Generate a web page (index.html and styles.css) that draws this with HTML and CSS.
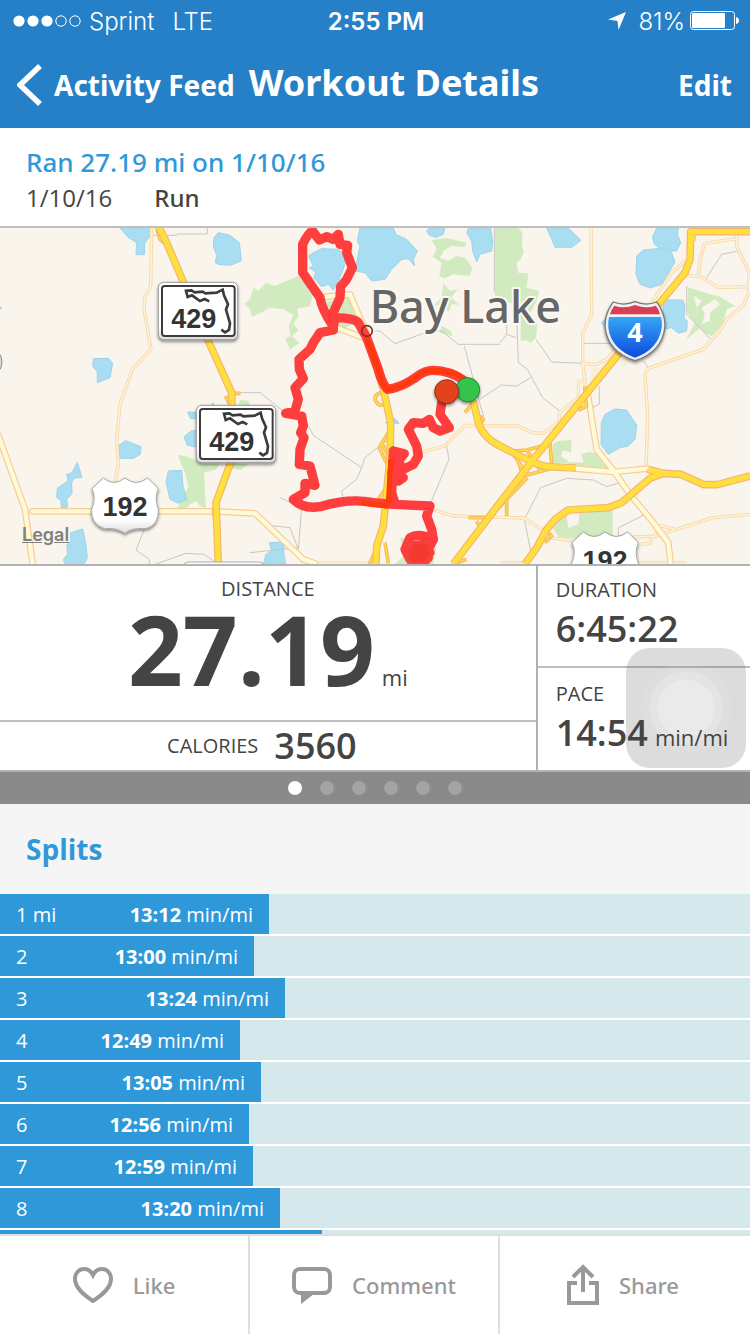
FILE: index.html
```html
<!DOCTYPE html>
<html lang="en">
<head>
<meta charset="utf-8">
<meta name="viewport" content="width=device-width, initial-scale=1">
<title>Workout Details</title>
<link rel="stylesheet" href="styles.css">
</head>
<body>
<div class="app">
  <header class="top">
    <div class="status">
      <div class="carrier">
        <svg class="signal" viewBox="0 0 68 12" aria-hidden="true">
          <g fill="#fff"><circle cx="6" cy="6" r="5.6"/><circle cx="20" cy="6" r="5.6"/><circle cx="34" cy="6" r="5.6"/></g>
          <g fill="none" stroke="#fff"><circle cx="48" cy="6" r="5.2"/><circle cx="62" cy="6" r="5.2"/></g>
        </svg>
        <span>Sprint</span>
        <span class="network">LTE</span>
      </div>
      <div class="time">2:55 PM</div>
      <div class="power">
        <svg class="locate" viewBox="0 0 18 18" aria-hidden="true"><path fill="#fff" d="M18 0 10.500 18 9.500 9 0 7.500Z"/></svg>
        <span>81%</span>
        <svg class="battery" viewBox="0 0 49 20" aria-hidden="true">
          <rect x=".5" y=".5" width="44" height="18" rx="3" fill="none" stroke="#fff"/>
          <rect x="2" y="2" width="33" height="15" rx="1" fill="#fff"/>
          <path fill="#fff" d="M46 6Q49 6.500 49 9.500T46 13Z"/>
        </svg>
      </div>
    </div>
    <nav class="nav">
      <button class="back" type="button">
        <svg class="chevron" viewBox="0 0 25 42" aria-hidden="true"><path d="M23 2 3 21 23 40" fill="none" stroke="#fff" stroke-width="5.500"/></svg>
        <span>Activity Feed</span>
      </button>
      <h1 class="title">Workout Details</h1>
      <button class="edit" type="button">Edit</button>
    </nav>
  </header>

  <main class="content">
    <section class="summary">
      <h2 class="workout-name">Ran 27.19 mi on 1/10/16</h2>
      <p class="meta"><span>1/10/16</span><span class="kind">Run</span></p>
    </section>

    <section class="map">
      <svg class="map-art" viewBox="0 6 2250 1008" role="img" aria-label="Route map">
        <defs>
          <linearGradient id="blue" x1="0" y1="0" x2="0" y2="1"><stop offset="0" stop-color="#35a6f5"/><stop offset="1" stop-color="#0d49dd"/></linearGradient>
          <linearGradient id="plate" x1="0" y1="0" x2="0" y2="1"><stop offset=".75" stop-color="#fff"/><stop offset="1" stop-color="#ddd"/></linearGradient>
          <filter id="drop" x="-20%" y="-20%" width="140%" height="150%"><feDropShadow dx="0" dy="5" stdDeviation="4" flood-color="#000" flood-opacity=".5"/></filter>
          <path id="us-route" d="M310 756Q342 783 375 756 408 783 443 756L475 788Q462 815 475 850 477 897 438 908 395 904 375 922 352 904 313 908 272 894 275 850 290 815 276 788Z"/>
          <g id="fl-route">
            <rect x="475" y="169" width="238" height="172" rx="16" fill="url(#plate)" stroke="#999" stroke-width="3" filter="url(#drop)"/>
            <rect x="486" y="180" width="218" height="150" rx="8" fill="#fff" stroke="#3c3c3c" stroke-width="6"/>
            <path d="M628 226 614 219 600 225 576 208 563 213 558 194 574 193 584 199 608 197 616 202 650 200 668 191 672 208 684 235 678 251 690 292 687 312 675 319 664 311" fill="none" stroke="#3c3c3c" stroke-width="8"/>
            <text class="route-number" x="581" y="305">429</text>
          </g>
          <g id="roads-minor">
            <path d="M455 6 452 180 434 215 432 250 453 370 397 430 360 535 350 640 355 715 345 770"/>
            <path d="M1773 6 1775 265 1748 320 1748 412 1758 490M1750 412 1790 415 1820 400 1850 365M1755 462 1736 467 1735 515 1680 558 1676 588 1630 622 1595 620 1555 600 1395 598 1335 660 1240 685"/>
            <path d="M1938 725 1943 570 1935 445 1943 428 2110 370 2155 320 2180 280 2230 237 2247 200 2247 140 2210 60 2210 6M2055 148 2100 152 2155 184 2250 182M2095 150 2102 95 2113 52 2210 38M1955 230 2015 140 2055 105"/>
            <path d="M1290 848 1360 870 1570 876 1625 910 1650 935 1720 945M1875 935 1970 930 2000 920 2140 875 2250 865M1920 955 1948 952 1982 898 2030 912M930 1012H1110M1500 1011H1580M1915 1011H2060"/>
          </g>
          <g id="roads-main">
            <path d="M98 856H640L765 862 910 1000 945 1012M-5 628 75 850 98 1014"/>
            <path d="M1765 515 1790 670 1845 740 1890 805 1960 890 2005 950 2012 1014M1728 728 1840 738 1942 728"/>
            <path d="M955 215 1050 205 1105 335M1010 305 1090 335"/>
          </g>
          <g id="ramps">
            <path d="M676 510 690 535M690 502H722M640 850 648 905M470 6 480 40 505 60"/>
            <path d="M1145 500Q1120 505 1127 525 1138 545 1155 532M1165 620 1138 665 1163 718M1145 650 1165 690M1165 775 1135 820 1150 835M1145 935 1108 1014M1155 950 1165 1012"/>
            <path d="M1530 676 1580 672 1650 654 1655 712M1548 686 1570 750 1650 728M1530 672 1585 748M1580 672 1622 735M1582 755 1520 820 1520 870M1555 775 1498 845"/>
            <path d="M1395 560 1415 535M1440 570 1450 580 1438 600M1500 830 1470 875H1405M1430 885 1445 915M1400 1000 1360 1014M1755 480V510L1760 540 1735 553M1630 905 1655 930 1635 950M1940 735 1970 740"/>
          </g>
          <g id="highways">
            <path d="M478 6 500 50 625 345 695 500 700 700 690 715 648 830 655 1014"/>
            <path d="M2250 17H2072L2070 100 2055 140 1980 230 1855 385 1600 700 1500 830 1360 1014M2075 16V45"/>
            <path d="M1420 525 1435 590Q1450 635 1500 660L1605 712 1640 722 1728 726M1945 730 1990 742 2042 745 2112 776 2152 776 2250 750"/>
            <path d="M1575 1014 1610 965 1640 910 1665 880 1705 852 1825 845 1865 830 1950 757 1990 742M1100 330 1150 490 1172 590 1170 690 1160 800 1150 900 1130 960 1128 1014"/>
          </g>
        </defs>
        <rect y="6" width="2250" height="1008" fill="#f9f5ed"/>
        <g fill="#d1eabf">
          <path d="M532 686 565 692 605 712 660 712 650 730 612 740 618 846 600 840 590 825 570 835 560 846 532 846 550 815 565 780 555 740ZM720 522 745 524 750 540H715ZM700 710 745 714 722 732 695 728Z"/>
          <path d="M732 234 750 220 760 185 775 195 798 170 825 180 895 150 940 200 930 240 892 248 895 270 880 295 896 312 875 330 898 350 870 371 856 338 872 330 866 300 880 268 850 250 810 245 780 262 755 272 750 250Z"/>
          <path d="M960 230 1050 215 1070 290 1025 310 995 285Z"/>
          <path d="M1295 42 1340 36 1400 50 1395 64 1355 60 1330 75 1320 95 1345 105 1370 90 1395 95 1417 125 1410 150 1360 145 1335 157 1318 150 1325 110 1297 92 1310 70ZM1330 172 1350 195 1375 190 1352 215 1378 236 1355 235 1345 258 1330 235 1300 240 1325 215ZM1325 300 1352 315 1357 330 1320 320Z"/>
          <path d="M1485 6H1555L1568 20 1565 60 1572 75 1562 100 1550 110 1555 140 1585 142 1580 185 1618 195 1610 225 1585 270 1612 290 1608 335 1592 352 1582 342 1562 345V290L1550 240 1485 210Z"/>
          <path fill-rule="evenodd" d="M2064 184 2130 205 2155 210 2205 240 2180 250 2170 292 2135 330 2115 322 2100 305 2058 342 2085 290 2062 260ZM2082 210 2090 245 2105 225ZM2105 245 2145 220 2160 235 2130 260 2130 285 2105 295 2115 265Z"/>
          <path d="M1658 655 1675 645 1715 642 1713 680 1690 672 1682 690 1705 705 1700 712 1658 710ZM1745 685 1765 678 1810 682 1800 700 1825 727 1700 722 1705 708 1750 710ZM1738 862 1838 852V930L1725 938 1675 932 1655 900 1700 870 1705 905 1735 895ZM1200 935 1310 960 1300 1014H1185L1215 985Z"/>
        </g>
        <path d="M1775 425H1815L1800 462 1770 480ZM1855 400 1890 395 1882 415 1862 418Z" fill="#f9efd2"/>
        <g fill="#a9def2" stroke="#9fd3ea" stroke-width="3">
          <path d="M360 6 384 34 410 50 408 86H433L434 52 451 30 453 6ZM655 20 690 28 718 50 724 104 692 118 655 115 646 110 650 88 640 60 642 35ZM280 398 325 397 338 412 330 455 292 470V438L278 420ZM357 657 377 644 423 662 421 685 400 697H358Z"/>
          <path d="M232 709 246 754 221 757 215 770 216 803 200 820 203 843 184 846 182 822 170 815 172 786 204 765 200 745 216 740ZM505 735 545 733 549 780 560 820 535 832 510 820 498 768ZM248 909 257 950 262 997 252 1014H195L190 1000 203 985 200 957 213 945 212 920ZM563 558 600 560V578H572ZM552 632 575 614H600V665L562 658ZM630 540 640 530 645 550Z"/>
          <path d="M1080 6H1180L1188 25 1220 40 1252 75 1240 100 1244 120 1225 98 1206 100 1175 130 1155 160 1115 165 1095 140 1065 135 1072 100 1080 60 1072 45ZM940 80 965 68 1015 70 1040 90 1030 130 1015 165 1000 192 985 175 965 182 940 155 947 140 928 125 940 120 925 90ZM1280 14 1290 6H1334L1330 25 1308 34 1288 28ZM1405 8 1472 6 1478 45 1475 75 1440 85 1430 108 1418 75 1415 45 1400 20ZM808 950 855 948 850 975 857 1014H790L798 985 815 975ZM1155 590 1185 578 1197 592Z"/>
          <path d="M1640 6H1705L1743 43 1715 64H1665L1655 40ZM1970 6H2035L2032 25 2042 50 2030 75H1990L1963 55 1957 35ZM1930 72 2000 65 2015 80 2025 108 2000 150 1985 175 1950 186 1920 175 1908 145 1910 90ZM2000 222H2048L2055 240 2052 275 2062 285 2060 315 2035 322 2015 305 1990 310V230ZM1815 565 1845 549 1880 552 1910 598 1905 640 1885 660 1860 665 1825 685 1803 655 1804 590ZM1805 290 1820 275V310ZM0 244 5 246 0 250Z"/>
        </g>
        <g fill="none" stroke="#c9c7c1" stroke-width="3">
          <path d="M455 28H530L532 24H622V6M435 905 408 972 448 1000V1014M468 1014 558 982 612 985 652 1012M715 500H780L880 580H915L940 628 1085 725 1070 760 1025 795 1035 840M1085 725 1095 695 1165 640"/>
          <path d="M840 815 905 845 895 970 870 905 805 898M895 965 750 980M1483 6V200M1125 315H1140L1185 353 1290 315H1325L1375 355H1500M1393 360 1450 570M1440 520 1500 480M1340 660 1347 700 1290 835"/>
          <path d="M1500 350 1520 325 1548 335M1550 270 1555 410 1582 430 1628 515 1680 556M1500 477 1550 480 1592 455M1608 340 1655 408 1748 412M1748 352H1830M1520 325V270M1798 480V535L1770 548M1592 975 1573 880 1622 785 1700 757 1780 762 1820 782 1860 770M1855 940V905L1930 868M2060 180V265L2130 338M2118 158 2165 85 2215 75M1930 405 1945 425"/>
        </g>
        <g fill="none" stroke-linejoin="round">
          <use href="#roads-minor" stroke="#f8d6a2" stroke-width="10"/>
          <use href="#roads-minor" stroke="#fdf3d9" stroke-width="5"/>
          <use href="#roads-main" stroke="#f8cb92" stroke-width="20" stroke-linecap="round"/>
          <use href="#roads-main" stroke="#fffbd9" stroke-width="13" stroke-linecap="round"/>
          <use href="#ramps" stroke="#f6b35f" stroke-width="11"/>
          <use href="#ramps" stroke="#ffdc42" stroke-width="5"/>
          <use href="#highways" stroke="#f6b56f" stroke-width="23"/>
          <use href="#highways" stroke="#ffdf3d" stroke-width="16"/>
        </g>
        <text class="place" x="1109" y="290">Bay Lake</text>
        <g fill="none" stroke="#ff3535" stroke-width="28" stroke-linecap="round" stroke-linejoin="round" opacity=".95">
          <path d="M1395 465Q1350 433 1300 433 1275 433 1250 452 1205 485 1162 490 1145 470 1135 430L1100 335 1075 290Q1060 275 1005 275L1000 302Q965 250 960 215L908 140V55Q925 20 938 15L958 42 980 32 1000 40 1015 25 1020 55 1043 58 1040 80 1057 125 1040 160 1022 182 1020 215 1000 260V300L1000 312 960 320 940 350 930 370 897 400 898 430 910 458 885 485 895 520 885 555 857 562 905 570 910 600 902 620 912 635 900 670 898 715 930 720 938 750 945 778 915 772V800L880 820Q910 850 960 842 1050 815 1120 830L1180 835 1290 840 1280 870 1295 910 1300 940"/>
          <path d="M1180 675 1175 800 1185 832M1180 675 1213 683 1195 705 1205 725 1190 740 1210 755 1195 765 1175 740M1180 690 1188 720 1200 735 1240 715 1255 690 1250 660 1225 610 1240 590 1270 592 1288 580 1300 605 1320 615 1348 605 1320 565 1325 530"/>
          <path d="M1300 940Q1255 920 1230 935L1215 970 1230 1000 1270 995 1290 980 1270 955 1238 960 1250 985 1275 1000 1245 1010M1295 930 1290 960 1300 940M1225 985 1285 970M1235 1010H1270L1285 995"/>
        </g>
        <path d="M1225 975 1240 955 1280 950 1290 985 1270 1005 1235 1008Z" fill="#f33a2e"/>
        <path d="M1388 455Q1350 433 1300 433 1275 433 1250 452 1205 485 1162 490 1145 470 1135 430L1100 335M1172 705 1165 830M1090 830 1160 840" fill="none" stroke="#ff3a0a" stroke-width="15" stroke-linecap="round"/>
        <circle cx="1101" cy="315" r="16" fill="none" stroke="#79302c" stroke-width="5"/>
        <g stroke-width="3">
          <circle cx="1403" cy="491" r="36" fill="#36c44b" stroke="#208b35" filter="url(#drop)"/>
          <circle cx="1340" cy="497" r="36" fill="#e2431f" stroke="#8e3020" filter="url(#drop)"/>
        </g>
        <use href="#fl-route"/>
        <use href="#fl-route" x="114" y="369"/>
        <rect x="552" y="1008" width="238" height="60" rx="12" fill="#fff" stroke="#aaa" stroke-width="3"/>
        <circle cx="-40" cy="408" r="46" fill="#ddd" stroke="#888" stroke-width="3"/>
        <use href="#us-route" fill="url(#plate)" stroke="#aaa" stroke-width="3" filter="url(#drop)"/>
        <text class="route-number" x="375" y="870">192</text>
        <use href="#us-route" x="1440" y="162" fill="#fff" stroke="#aaa" stroke-width="3" filter="url(#drop)"/>
        <text class="route-number" x="1815" y="1032">192</text>
        <path d="M1840 228Q1872 241 1905 227 1938 241 1970 228L1978 240Q1995 268 1995 300 1988 378 1905 404 1820 376 1815 300 1815 268 1832 240Z" fill="#eef0f6" stroke="#777" stroke-width="4" filter="url(#drop)"/>
        <path d="M1843 239Q1873 249 1905 237 1937 249 1968 239 1977 252 1980 265H1830Q1834 250 1843 239Z" fill="#d93f4e"/>
        <path d="M1827 273H1983Q1987 285 1985 305 1975 370 1905 395 1833 368 1825 305 1823 290 1827 273Z" fill="url(#blue)"/>
        <text class="interstate" x="1905" y="347">4</text>
      </svg>
      <a class="legal" href="#legal">Legal</a>
    </section>

    <section class="stats">
      <div class="stats-main">
        <div class="distance">
          <h3 class="stat-label">DISTANCE</h3>
          <p class="distance-value">27.19<span class="unit">mi</span></p>
        </div>
        <div class="calories">
          <h3 class="stat-label">CALORIES</h3>
          <p class="stat-value">3560</p>
        </div>
      </div>
      <div class="stats-side">
        <div class="side-stat">
          <h3 class="stat-label">DURATION</h3>
          <p class="stat-value">6:45:22</p>
        </div>
        <div class="side-stat">
          <h3 class="stat-label">PACE</h3>
          <p class="stat-value">14:54<span class="unit">min/mi</span></p>
        </div>
      </div>
      <button class="assist" type="button" aria-label="AssistiveTouch"><span class="assist-ring"></span></button>
    </section>

    <div class="pager">
      <span class="dot current"></span><span class="dot"></span><span class="dot"></span><span class="dot"></span><span class="dot"></span><span class="dot"></span>
    </div>

    <section class="splits">
      <h2 class="splits-title">Splits</h2>
      <ol class="split-list">
        <li class="split"><div class="bar" style="width:35.87%"><span>1 mi</span><span><b>13:12</b> min/mi</span></div></li>
        <li class="split"><div class="bar" style="width:33.87%"><span>2</span><span><b>13:00</b> min/mi</span></div></li>
        <li class="split"><div class="bar" style="width:38%"><span>3</span><span><b>13:24</b> min/mi</span></div></li>
        <li class="split"><div class="bar" style="width:32%"><span>4</span><span><b>12:49</b> min/mi</span></div></li>
        <li class="split"><div class="bar" style="width:34.8%"><span>5</span><span><b>13:05</b> min/mi</span></div></li>
        <li class="split"><div class="bar" style="width:33.2%"><span>6</span><span><b>12:56</b> min/mi</span></div></li>
        <li class="split"><div class="bar" style="width:33.73%"><span>7</span><span><b>12:59</b> min/mi</span></div></li>
        <li class="split"><div class="bar" style="width:37.33%"><span>8</span><span><b>13:20</b> min/mi</span></div></li>
        <li class="split"><div class="bar" style="width:42.93%"></div></li>
      </ol>
    </section>
  </main>

  <footer class="actions">
    <button class="action" type="button">
      <svg class="icon-like" viewBox="0 0 40 36" aria-hidden="true"><path d="M20 34C11 28 2 21 2 12 2 6 6 2 11 2 15 2 18 4 20 8 22 4 25 2 29 2 34 2 38 6 38 12 38 21 29 28 20 34Z" fill="none" stroke="#999" stroke-width="4"/></svg>
      <span>Like</span>
    </button>
    <button class="action" type="button">
      <svg class="icon-comment" viewBox="0 0 40 38" aria-hidden="true"><rect x="2" y="3" width="36" height="24" rx="6" fill="none" stroke="#999" stroke-width="4"/><path d="M9 28H22L9 38Z" fill="#999"/></svg>
      <span>Comment</span>
    </button>
    <button class="action" type="button">
      <svg class="icon-share" viewBox="0 0 32 42" aria-hidden="true"><path d="M10 19H2V39H30V19H22M16 28V4M6 13 16 3 26 13" fill="none" stroke="#999" stroke-width="4"/></svg>
      <span>Share</span>
    </button>
  </footer>
</div>
</body>
</html>
```
FILE: styles.css
```css
* { box-sizing: border-box; }
body, h1, h2, h3, p, ol { margin: 0; padding: 0; }
body { font-family: "Open Sans", "Noto Sans", sans-serif; color: #444; background: #fff; }
button { border: 0; padding: 0; background: none; color: inherit; font: inherit; cursor: pointer; }
svg { display: block; flex: none; }

.app { display: flex; flex-direction: column; height: 100vh; }

.top { background: #2580c8; color: #fff; flex: none; }
.status { display: grid; grid-template-columns: 1fr auto 1fr; align-items: center; height: 42px; padding: 0 11px 0 13px; font-family: Inter, Roboto, sans-serif; font-size: 24px; }
.carrier, .power { display: flex; align-items: center; }
.carrier { gap: 8px; font-weight: 300; }
.network { margin-left: 10px; }
.time { font-weight: 600; }
.power { justify-content: flex-end; gap: 5px; font-weight: 300; }
.signal { width: 68px; height: 12px; }
.locate { width: 18px; height: 18px; margin-right: 7px; }
.battery { width: 49px; height: 20px; }
.nav { display: flex; align-items: center; height: 86px; padding: 0 18px 0 17px; font-family: "Noto Sans", "Open Sans", sans-serif; }
.back { display: flex; align-items: center; gap: 12px; font-size: 28px; font-weight: 700; white-space: nowrap; }
.chevron { width: 25px; height: 42px; }
.title { margin-left: 14px; padding-bottom: 6px; font-size: 36px; font-weight: 700; white-space: nowrap; }
.edit { margin-left: auto; font-size: 28px; font-weight: 700; }

.content { flex: 1; min-height: 0; overflow-y: auto; scrollbar-width: none; background: #f5f5f5; }

.summary { padding: 16px 26px 12px; background: #fff; border-bottom: 2px solid #bfbfbf; }
.workout-name { font-family: "Noto Sans", sans-serif; font-size: 26px; line-height: 37px; font-weight: 500; color: #2f98d9; }
.meta { display: flex; gap: 42px; font-size: 24px; line-height: 33px; }
.kind { font-family: "Noto Sans", sans-serif; font-weight: 500; }

.map { position: relative; overflow: hidden; }
.map-art { width: 100%; height: auto; }
.legal { position: absolute; left: 22px; bottom: 18px; font-family: Inter, sans-serif; font-size: 18px; line-height: 22px; font-weight: 600; color: #808080; }
.place { font-family: "Noto Sans", sans-serif; font-size: 135px; font-weight: 500; fill: #666; stroke: #fbf8f2; stroke-width: 12px; paint-order: stroke; stroke-linejoin: round; }
.route-number { font-family: "Liberation Sans", sans-serif; font-size: 81px; font-weight: 700; fill: #333; text-anchor: middle; }
.interstate { font-size: 81px; font-weight: 700; fill: #fff; text-anchor: middle; }

.stats { position: relative; display: grid; grid-template-columns: 5fr 2fr; background: #fff; border-top: 2px solid #b2b2b2; border-bottom: 2px solid #b2b2b2; }
.stats-main { display: flex; flex-direction: column; }
.distance { flex: 1; padding-top: 9px; text-align: center; border-bottom: 2px solid #bfbfbf; }
.stat-label { font-size: 20px; line-height: 28px; font-weight: 400; }
.distance-value { font-size: 96px; line-height: 92px; font-weight: 700; }
.unit { margin-left: 7px; font-size: 22px; line-height: 24px; font-weight: 400; }
.calories { display: flex; align-items: center; justify-content: center; gap: 16px; height: 48px; padding-right: 12px; }
.stat-value { position: relative; z-index: 1; font-size: 36px; line-height: 50px; font-weight: 600; white-space: nowrap; }
.stats-side { border-left: 2px solid #b2b2b2; }
.side-stat { height: 102px; padding: 10px 0 0 18px; }
.side-stat + .side-stat { padding-top: 12px; }
.side-stat:first-child { border-bottom: 2px solid #bfbfbf; }
.assist { position: absolute; right: 4px; bottom: 2px; display: grid; place-items: center; width: 120px; height: 120px; border-radius: 24px; background: rgba(80, 80, 80, .2); }
.assist-ring { width: 58px; height: 58px; border-radius: 50%; background: rgba(255, 255, 255, .4); box-shadow: 0 0 0 8px rgba(255, 255, 255, .18), 0 0 0 16px rgba(255, 255, 255, .07); }

.pager { display: flex; align-items: center; justify-content: center; gap: 18px; height: 32px; background: #8a8a8a; }
.dot { width: 14px; height: 14px; border-radius: 50%; background: #a3a3a3; }
.dot.current { background: #fff; }

.splits-title { padding: 26px; font-size: 28px; line-height: 38px; font-weight: 700; color: #2f98d9; }
.split-list { display: grid; gap: 2px; list-style: none; background: #fff; }
.split { height: 40px; background: #d5e9ec; }
.bar { display: flex; align-items: center; justify-content: space-between; height: 100%; padding: 0 16px; background: #2f98d9; color: #fff; font-size: 20px; white-space: nowrap; }
.bar b { font-weight: 700; }

.actions { display: grid; grid-template-columns: repeat(3, 1fr); flex: none; height: 100px; background: #fff; border-top: 2px solid #dfdfdf; }
.action { display: flex; align-items: center; justify-content: center; gap: 20px; font-family: "Noto Sans", sans-serif; font-size: 22px; font-weight: 500; color: #999; border-right: 2px solid #dfdfdf; }
.action:last-child { border-right: 0; padding-right: 4px; }
.icon-like { width: 40px; height: 36px; }
.icon-comment { width: 40px; height: 38px; }
.icon-share { width: 32px; height: 42px; }
```
